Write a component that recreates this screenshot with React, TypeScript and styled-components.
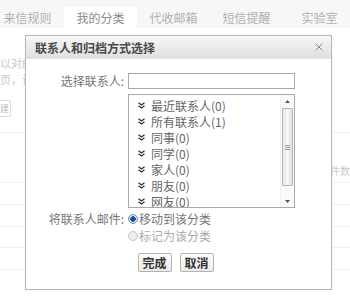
import styled, { createGlobalStyle } from "styled-components";

const GlobalStyle = createGlobalStyle`
  html, body {
    margin: 0;
    padding: 0;
    background: #fff;
  }
  body {
    width: 350px;
    height: 300px;
    overflow: hidden;
    font-family: "Noto Sans CJK SC", "Liberation Sans", sans-serif;
    font-size: 12px;
  }
`;

const Page = styled.div`
  position: relative;
  width: 350px;
  height: 300px;
  overflow: hidden;
  background: #fff;
`;

// tabs along the top of the settings page
const TabBar = styled.div`
  display: flex;
  height: 28px;
  padding-top: 7px;
  box-sizing: border-box;
  background: #f7f7f7;
  margin-left: -9px;
`;

const Tab = styled.div<{ $active?: boolean }>`
  flex: 0 0 73px;
  display: flex;
  align-items: center;
  justify-content: center;
  font-size: 12px;
  color: ${(p) => (p.$active ? "#8a8a8a" : "#b0b0b0")};
  background: ${(p) => (p.$active ? "#fff" : "transparent")};
`;

const Content = styled.div`
  padding-top: 27px;
  color: #c8c8c8;
  font-size: 11px;
`;

const IntroLine = styled.div`
  height: 16px;
  line-height: 16px;
  white-space: nowrap;
`;

const GhostButton = styled.div`
  margin: 13px 0 0 -22px;
  width: 30px;
  height: 15px;
  border: 1px solid #ddd;
  border-radius: 2px;
  font-size: 9px;
  line-height: 15px;
  text-align: right;
  padding-right: 1px;
  color: #bbb;
`;

const TableRow = styled.div<{ $h: number }>`
  height: ${(p) => p.$h}px;
  border-bottom: 1px solid #f0f0f0;
  display: flex;
  justify-content: flex-end;
  align-items: flex-end;
  white-space: nowrap;
`;

const HeaderText = styled.span`
  padding: 0 0 4px;
  font-size: 10px;
  color: #ccc;
`;

const Zero = styled.span`
  position: absolute;
  right: 19px;
  bottom: 8px;
  font-size: 10px;
  color: #999;
`;

// the modal dialog lies over the page
const Dialog = styled.div`
  position: absolute;
  left: 25px;
  top: 35px;
  width: 305px;
  border: 1px solid #b8b8b8;
  background: #fff;
  box-shadow: 0 0 2px rgba(0, 0, 0, 0.08);
`;

const TitleBar = styled.div`
  height: 22px;
  display: flex;
  align-items: center;
  justify-content: space-between;
  padding: 0 8px 0 9px;
  background: linear-gradient(#f7f7f7, #e0e0e0);
  border-bottom: 1px solid #e4e4e4;
`;

const Title = styled.div`
  font-size: 12px;
  font-weight: 700;
  color: #4a4a4a;
`;

const Body = styled.div`
  display: flex;
  flex-direction: column;
  padding: 14px 0 17px;
`;

const FormRow = styled.div<{ $mt?: number }>`
  display: grid;
  grid-template-columns: 98px 167px;
  column-gap: 4px;
  align-items: center;
  margin-top: ${(p) => p.$mt ?? 0}px;
`;

const Label = styled.div`
  text-align: right;
  color: #777;
  font-size: 12px;
  line-height: 16px;
`;

const TextInput = styled.div`
  height: 14px;
  border: 1px solid #a9a9a9;
  background: #fff;
`;

const ListBox = styled.div`
  grid-column: 2;
  height: 112px;
  border: 1px solid #a9a9a9;
  display: flex;
  overflow: hidden;
`;

const Items = styled.div`
  flex: 1;
  padding: 2px 0 0 9px;
`;

const Item = styled.div`
  height: 16px;
  display: flex;
  align-items: center;
  gap: 6px;
  color: #666;
  font-size: 12px;
  white-space: nowrap;
`;

const ScrollBar = styled.div`
  width: 13px;
  display: flex;
  flex-direction: column;
  border-left: 1px solid #f0f0f0;
  background: #fafafa;
`;

const ScrollArrow = styled.div`
  height: 12px;
  display: flex;
  align-items: center;
  justify-content: center;
`;

const Thumb = styled.div`
  margin: 1px 1px 0;
  height: 76px;
  border: 1px solid #b5b5b5;
  border-radius: 1px;
  background: linear-gradient(90deg, #e6e6e6, #f7f7f7 50%, #e0e0e0);
  display: flex;
  align-items: center;
  justify-content: center;
`;

const Track = styled.div`
  flex: 1;
`;

const RadioLine = styled.label<{ $disabled?: boolean }>`
  grid-column: 2;
  display: flex;
  align-items: center;
  gap: 1px;
  font-size: 12px;
  line-height: 16px;
  color: ${(p) => (p.$disabled ? "#aaa" : "#777")};
`;

const RadioDot = styled.span<{ $checked?: boolean; $disabled?: boolean }>`
  width: 10px;
  height: 10px;
  border-radius: 50%;
  box-sizing: border-box;
  border: 1px solid ${(p) => (p.$disabled ? "#c4c4c4" : "#6d8fb5")};
  background: ${(p) =>
    p.$checked
      ? "radial-gradient(circle, #1b4f8a 0 2.5px, #dfe8f2 3px)"
      : p.$disabled
      ? "#eee"
      : "#fff"};
`;

const Buttons = styled.div`
  display: flex;
  justify-content: center;
  gap: 8px;
  margin-top: 9px;
  padding-right: 6px;
`;

const Button = styled.button`
  width: 34px;
  height: 19px;
  padding: 0;
  border: 1px solid #b3b3b3;
  border-radius: 2px;
  background: linear-gradient(#fdfdfd, #ebebeb);
  font-family: "Noto Sans CJK SC", sans-serif;
  font-size: 12px;
  font-weight: 700;
  color: #333;
`;

const Chevron = () => (
  <svg width="7" height="7" viewBox="0 0 7 7">
    <path
      d="M0.5 0.8 L3.5 3 L6.5 0.8 M0.5 3.8 L3.5 6 L6.5 3.8"
      fill="none"
      stroke="#333"
      strokeWidth="1.3"
    />
  </svg>
);

const groups = [
  "最近联系人(0)",
  "所有联系人(1)",
  "同事(0)",
  "同学(0)",
  "家人(0)",
  "朋友(0)",
  "网友(0)",
];

const tabs = ["来信规则", "我的分类", "代收邮箱", "短信提醒", "实验室"];

export default function App() {
  return (
    <Page>
      <GlobalStyle />
      <TabBar>
        {tabs.map((t, i) => (
          <Tab key={t} $active={i === 1}>
            {t}
          </Tab>
        ))}
      </TabBar>
      <Content>
        <IntroLine>以对邮</IntroLine>
        <IntroLine>页，让</IntroLine>
        <GhostButton>建</GhostButton>
        <TableRow $h={15} />
        <TableRow $h={49}>
          <HeaderText>件数</HeaderText>
        </TableRow>
        <TableRow $h={21} />
        <TableRow $h={21} />
        <TableRow $h={20} />
        <TableRow $h={21} />
        <Zero>0</Zero>
      </Content>

      <Dialog>
        <TitleBar>
          <Title>联系人和归档方式选择</Title>
          <svg width="8" height="8" viewBox="0 0 8 8">
            <path d="M0.5 0.5 L7.5 7.5 M7.5 0.5 L0.5 7.5" stroke="#888" strokeWidth="1" />
          </svg>
        </TitleBar>
        <Body>
          <FormRow>
            <Label>选择联系人:</Label>
            <TextInput />
          </FormRow>
          <FormRow $mt={5}>
            <ListBox>
              <Items>
                {groups.map((g) => (
                  <Item key={g}>
                    <Chevron />
                    {g}
                  </Item>
                ))}
              </Items>
              <ScrollBar>
                <ScrollArrow>
                  <svg width="5" height="3" viewBox="0 0 5 3">
                    <path d="M0 3 L2.5 0 L5 3 Z" fill="#555" />
                  </svg>
                </ScrollArrow>
                <Thumb>
                  <svg width="5" height="5" viewBox="0 0 5 5">
                    <path d="M0 0.5 H5 M0 2.5 H5 M0 4.5 H5" stroke="#999" strokeWidth="1" />
                  </svg>
                </Thumb>
                <Track />
                <ScrollArrow>
                  <svg width="5" height="3" viewBox="0 0 5 3">
                    <path d="M0 0 L2.5 3 L5 0 Z" fill="#555" />
                  </svg>
                </ScrollArrow>
              </ScrollBar>
            </ListBox>
          </FormRow>
          <FormRow $mt={3}>
            <Label>将联系人邮件:</Label>
            <RadioLine>
              <RadioDot $checked />
              移动到该分类
            </RadioLine>
          </FormRow>
          <FormRow $mt={1}>
            <RadioLine $disabled>
              <RadioDot $disabled />
              标记为该分类
            </RadioLine>
          </FormRow>
          <Buttons>
            <Button>完成</Button>
            <Button>取消</Button>
          </Buttons>
        </Body>
      </Dialog>
    </Page>
  );
}
